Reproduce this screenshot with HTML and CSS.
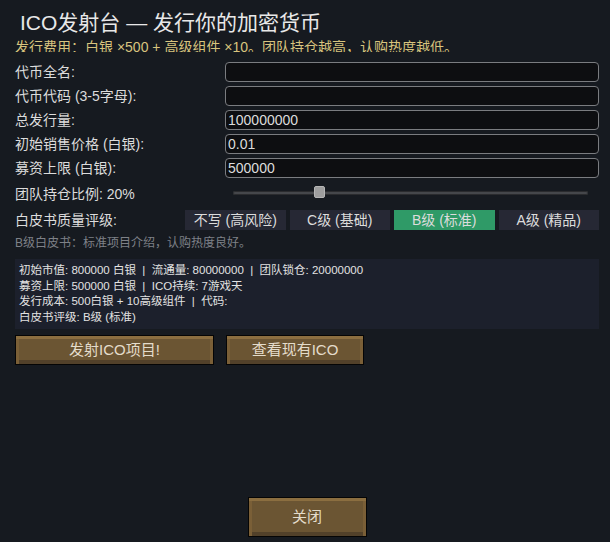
FILE: index.html
```html
<!DOCTYPE html>
<html>
<head>
<meta charset="utf-8">
<link rel="stylesheet" href="styles.css">
</head>
<body>
<div class="page">
  <h1 class="title">ICO发射台 — 发行你的加密货币</h1>
  <div class="subtitle">发行费用：白银 ×500 + 高级组件 ×10。团队持仓越高，认购热度越低。</div>
  <div class="form">
    <div class="label">代币全名:</div><div class="field"></div>
    <div class="label">代币代码 (3-5字母):</div><div class="field"></div>
    <div class="label">总发行量:</div><div class="field">100000000</div>
    <div class="label">初始销售价格 (白银):</div><div class="field">0.01</div>
    <div class="label">募资上限 (白银):</div><div class="field">500000</div>
    <div class="label slider-label">团队持仓比例: 20%</div>
    <div class="slider"><div class="track"><div class="thumb"></div></div></div>
  </div>
  <div class="grade-row">
    <div class="label grade-label">白皮书质量评级:</div>
    <div class="grade">不写 (高风险)</div>
    <div class="grade">C级 (基础)</div>
    <div class="grade active">B级 (标准)</div>
    <div class="grade">A级 (精品)</div>
  </div>
  <div class="desc">B级白皮书：标准项目介绍，认购热度良好。</div>
  <div class="info">
    <div>初始市值: 800000 白银 &nbsp;|&nbsp; 流通量: 80000000 &nbsp;|&nbsp; 团队锁仓: 20000000</div>
    <div>募资上限: 500000 白银 &nbsp;|&nbsp; ICO持续: 7游戏天</div>
    <div>发行成本: 500白银 + 10高级组件 &nbsp;|&nbsp; 代码: </div>
    <div>白皮书评级: B级 (标准)</div>
  </div>
  <div class="actions">
    <div class="btn launch">发射ICO项目!</div>
    <div class="btn view">查看现有ICO</div>
  </div>
  <div class="spacer"></div>
  <div class="close-wrap"><div class="btn close">关闭</div></div>
</div>
</body>
</html>
```
FILE: styles.css
```css
html, body {
  margin: 0;
  padding: 0;
  background: #161a20;
}
body {
  font-family: "Liberation Sans", "Noto Sans CJK SC", sans-serif;
  color: #dcdcdc;
}
.page {
  width: 610px;
  height: 542px;
  box-sizing: border-box;
  padding: 0 11px 5px 15px;
  display: flex;
  flex-direction: column;
  overflow: hidden;
}
.title {
  margin: 9px 0 0 5px;
  font-size: 21px;
  font-weight: normal;
  line-height: 28px;
  color: #e8e8e8;
}
.subtitle {
  font-size: 14px;
  line-height: 20px;
  height: 15px;
  overflow: hidden;
  color: #d8c47e;
  margin-top: 0;
  white-space: nowrap;
}
.form {
  display: grid;
  grid-template-columns: 210px 1fr;
  grid-auto-rows: 20px;
  row-gap: 4px;
  margin-top: 10px;
}
.label {
  font-size: 14px;
  line-height: 20px;
  color: #dcdcdc;
  white-space: nowrap;
}
.field {
  box-sizing: border-box;
  height: 20px;
  border: 1px solid #7a7c80;
  border-radius: 4px;
  background: #0d0e11;
  font-size: 14px;
  line-height: 18px;
  padding-left: 2px;
  color: #dcdcdc;
}
.slider-label {
  margin-top: 2px;
}
.slider {
  display: flex;
  align-items: center;
  padding: 0 11px 0 8px;
  margin-top: 2px;
}
.track {
  position: relative;
  flex: 1;
  height: 4px;
  border-radius: 2px;
  background: #45474b;
  box-shadow: inset 0 1px 0 #2a2b2e, inset 0 -1px 0 #2a2b2e;
}
.thumb {
  position: absolute;
  left: 81px;
  top: -5px;
  width: 11px;
  height: 12px;
  box-sizing: border-box;
  border-radius: 2px;
  background: #9e9e9e;
  border: 1px solid #b5b5b5;
}
.grade-row {
  display: flex;
  gap: 4px;
  margin-top: 8px;
  height: 20px;
}
.grade-label {
  width: 166px;
  flex: none;
}
.grade {
  flex: 1;
  background: #262834;
  font-size: 14px;
  line-height: 20px;
  text-align: center;
  color: #dcdcdc;
  white-space: nowrap;
}
.grade.active {
  background: #2f9a67;
}
.desc {
  font-size: 12px;
  line-height: 16px;
  color: #7e8188;
  margin-top: 5px;
}
.info {
  margin-top: 8px;
  background: #1c202c;
  height: 70px;
  box-sizing: border-box;
  padding: 4px 4px 0;
  font-size: 11.5px;
  line-height: 15.5px;
  color: #e2e2e2;
  white-space: nowrap;
}
.actions {
  display: flex;
  gap: 12px;
  margin-top: 6px;
}
.btn {
  box-sizing: border-box;
  border: 1px solid #050505;
  background: #6b5533;
  box-shadow: inset 0 3px 0 #8b6e40, inset 3px 0 0 #7a5f37, inset -3px 0 0 #7a5f37, inset 0 -4px 0 #52412a;
  color: #e4dccb;
  font-size: 15px;
  text-align: center;
  white-space: nowrap;
}
.launch {
  width: 199px;
  height: 30px;
  line-height: 28px;
}
.view {
  width: 138px;
  height: 30px;
  line-height: 28px;
}
.spacer {
  flex: 1;
}
.close-wrap {
  display: flex;
  justify-content: center;
}
.close {
  width: 119px;
  height: 40px;
  line-height: 38px;
}
```
